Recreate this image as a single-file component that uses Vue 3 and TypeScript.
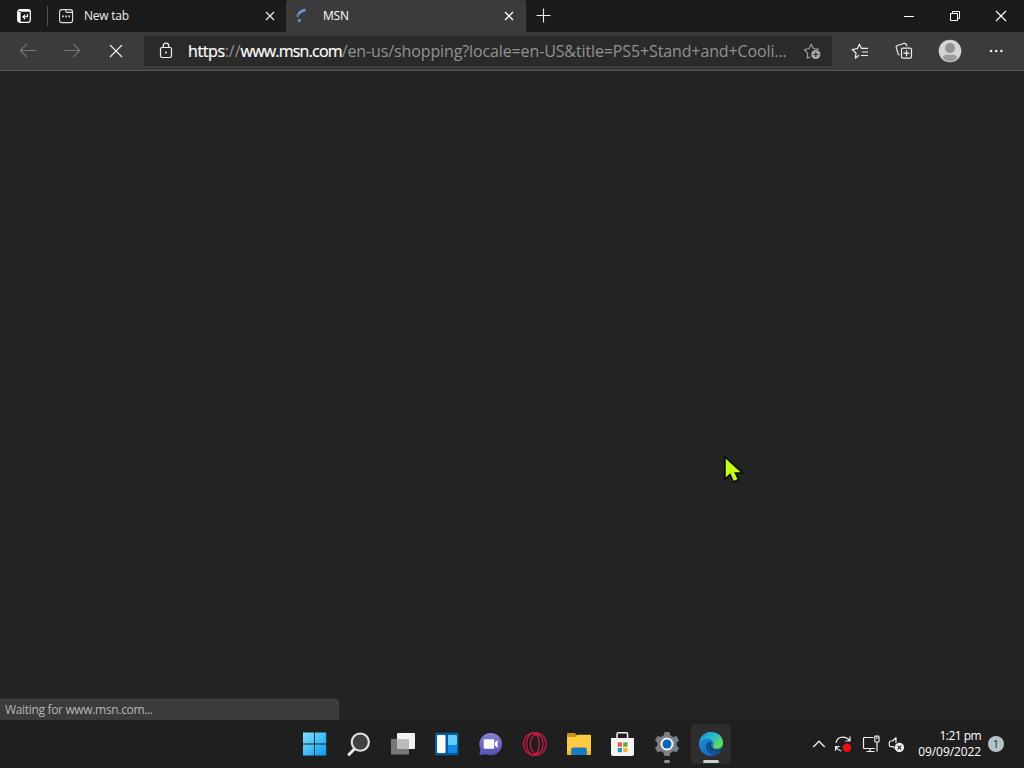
<script setup lang="ts">
const status = 'Waiting for www.msn.com...'
</script>

<template>
  <div class="screen">
    <header class="titlebar">
      <div class="tab-actions">
        <svg width="16" height="16" viewBox="0 0 16 16" fill="none">
          <rect x="1.7" y="1.7" width="12.6" height="12.6" rx="2.2" stroke="#fff" stroke-width="1.2" />
          <path d="M2 3.8H14V2.8L13 2H3L2 3Z M2 3H4.6V14H3L2 13Z" fill="#fff" />
          <path d="M11.4 6V8.8H7.2M9.2 6.6L7 8.8L9.2 11" stroke="#fff" stroke-width="1.1" />
        </svg>
      </div>
      <div class="tab idle">
        <svg width="16" height="16" viewBox="0 0 16 16" fill="none" stroke="#e2e2e2" stroke-width="1.1">
          <rect x="1.6" y="1.6" width="13" height="13" rx="2.4" />
          <path d="M7.8 1.6V3.3Q7.8 4.4 9 4.4H14.6" />
          <path d="M4.2 8.4H5.8M7.3 8.4H8.9M10.4 8.4H12" stroke-width="1.6" />
        </svg>
        <span class="tab-title first">New tab</span>
        <svg class="close" width="10" height="10" viewBox="0 0 10 10"><path d="M1 1L9 9M9 1L1 9" stroke="#eee" stroke-width="1.2" /></svg>
      </div>
      <div class="tab active">
        <svg width="16" height="16" viewBox="0 0 16 16" fill="none">
          <path d="M10.6 2Q5.7 2.5 3.4 6.4" stroke="#6a9bd0" stroke-width="2.7" />
          <path d="M2.9 5.8L2.8 9.2" stroke="#57799e" stroke-width="2.4" />
          <circle cx="4.3" cy="12.5" r="1.7" fill="#6492c2" />
        </svg>
        <span class="tab-title second">MSN</span>
        <svg class="close" width="10" height="10" viewBox="0 0 10 10"><path d="M1 1L9 9M9 1L1 9" stroke="#fff" stroke-width="1.3" /></svg>
      </div>
      <svg class="plus" width="16" height="16" viewBox="0 0 16 16"><path d="M.5 7.5H14.5M7.5 .5V14.5" stroke="#eee" stroke-width="1.1" /></svg>
      <div class="window-buttons">
        <span><svg width="12" height="12" viewBox="0 0 12 12"><path d="M1 6.5H11" stroke="#fff" /></svg></span>
        <span><svg width="12" height="12" viewBox="0 0 12 12" fill="none" stroke="#fff"><path d="M1.5 3.5H8.5V10.5H1.5Z" /><path d="M3.5 3.5V1.5H10.5V8.5H8.5" /></svg></span>
        <span><svg width="12" height="12" viewBox="0 0 12 12"><path d="M1 1L11 11M11 1L1 11" stroke="#fff" stroke-width="1.2" /></svg></span>
      </div>
    </header>

    <nav class="toolbar">
      <span class="nav"><svg width="18" height="16" viewBox="0 0 18 16" fill="none" stroke="#777" stroke-width="1.1"><path d="M17 7.5H1.5M8 .8L1.3 7.5L8 14.2" /></svg></span>
      <span class="nav"><svg width="18" height="16" viewBox="0 0 18 16" fill="none" stroke="#777" stroke-width="1.1"><path d="M1 7.5H16.5M10 .8L16.7 7.5L10 14.2" /></svg></span>
      <span class="nav"><svg width="16" height="16" viewBox="0 0 16 16"><path d="M2 2L14 14M14 2L2 14" stroke="#eee" stroke-width="1.1" /></svg></span>
      <div class="address">
        <svg class="lock" width="14" height="18" viewBox="0 0 14 18" fill="none" stroke="#eee" stroke-width="1.2">
          <rect x="1.5" y="5.5" width="11" height="10" rx="1.5" /><path d="M4.2 5.5V4Q4.2 1.2 7 1.2Q9.8 1.2 9.8 4V5.5" /><circle cx="7" cy="10.6" r="1" fill="#eee" stroke="none" />
        </svg>
        <div class="url"><span class="scheme">https</span><span class="slashes">://</span><span class="host">www.msn.com</span><span class="path">/en-us/shopping?locale=en-US&amp;title=PS5+Stand+and+Cooli...</span></div>
        <svg class="add-fav" width="18" height="18" viewBox="0 0 18 18" fill="none">
          <path d="M7.5 15L4.1 16.1L4.7 11.3L1.3 7.5L6.1 6.7L8.3 2.2L10.5 6.7L16 7.4" stroke="#999" stroke-width="1.2" stroke-linejoin="round" />
          <circle cx="12.8" cy="12.5" r="4.6" fill="#aaa" /><path d="M10.2 12.5H15.4M12.8 9.9V15.1" stroke="#303030" stroke-width="1.2" />
        </svg>
      </div>
      <span class="tool">
        <svg width="18" height="18" viewBox="0 0 18 18" fill="none" stroke="#eee" stroke-width="1.2" stroke-linejoin="round"><path d="M8 13.3L4.3 16.2L5 11L1.2 7.5L6.4 6.7L8.4 2.2L10.5 6.4H17M11.2 10H17M10 13.5H17" /></svg>
      </span>
      <span class="tool">
        <svg width="18" height="18" viewBox="0 0 18 18" fill="none" stroke="#eee" stroke-width="1.2" stroke-linejoin="round"><path d="M4.5 12.9L3.3 12.4L1.2 5.5Q.9 4 2.4 3.5L8.6 1.5Q10.5 1 11.2 2.5L12 4.2" /><rect x="6.5" y="6.2" width="10" height="10" rx="1.5" fill="#3b3b3b" /><path d="M11.5 8.2V14.2M8.5 11.2H14.5" /></svg>
      </span>
      <span class="tool profile">
        <svg width="24" height="24" viewBox="0 0 24 24"><circle cx="12" cy="12" r="11.3" fill="#d4d4d4" /><circle cx="12" cy="9" r="5" fill="#929292" /><path d="M4.7 18.5Q5.5 15.7 8.5 15.7H15.5Q18.5 15.7 19.3 18.5Q16.5 22.5 12 22.5Q7.5 22.5 4.7 18.5Z" fill="#9c9c9c" /></svg>
      </span>
      <span class="tool more"><svg width="16" height="4" viewBox="0 0 16 4" fill="#eee"><circle cx="3" cy="2" r="1.3" /><circle cx="8.2" cy="2" r="1.3" /><circle cx="13.4" cy="2" r="1.3" /></svg></span>
    </nav>

    <main class="page">
      <svg class="cursor" width="24" height="32" viewBox="0 0 24 32"><path d="M2 2V24L7 19.5L10.5 27L15.5 24.5L12.3 18H19.5Z" fill="#c5ff16" stroke="#080b03" stroke-width="1.5" /></svg>
      <div class="status"><span>{{ status }}</span></div>
    </main>

    <footer class="taskbar">
      <div class="apps">
        <span class="app">
          <svg width="24" height="24" viewBox="0 0 24 24"><defs><linearGradient id="win" x1="0" y1="0" x2="1" y2="1"><stop stop-color="#83e0fc" /><stop offset="1" stop-color="#079bf4" /></linearGradient></defs><path d="M0 .5H11.2V11.4H0ZM12 .5H23.2V11.4H12ZM0 12.4H11.2V23.5H0ZM12 12.4H23.2V23.5H12Z" fill="url(#win)" /></svg>
        </span>
        <span class="app"><svg width="24" height="24" viewBox="0 0 24 24" fill="#414141" stroke="#e6e6e6"><path d="M7.9 16.5L2.1 22.4" stroke-width="3" stroke-linecap="round" /><circle cx="13.3" cy="10.1" r="8.6" stroke-width="2.1" /></svg></span>
        <span class="app"><svg width="26" height="24" viewBox="0 0 26 24"><rect x="7" y="1" width="18" height="16" rx="1" fill="#f2f2f2" /><rect x="1" y="7" width="18" height="15.5" rx="1" fill="#777" /><path d="M7 7H19V17H7Z" fill="#bbb" /></svg></span>
        <span class="app"><svg width="24" height="24" viewBox="0 0 24 24"><rect x="0" y=".8" width="23.5" height="22.5" rx="1.5" fill="#075b9f" /><rect x="2" y="3" width="8.5" height="18" rx="1" fill="#f6fbff" /><rect x="13" y="3" width="9" height="10" rx=".7" fill="#66cef6" /><path d="M13 13H22V20Q22 21 21 21H14Q13 21 13 20Z" fill="#118ae8" /></svg></span>
        <span class="app">
          <svg width="24" height="24" viewBox="0 0 24 24"><defs><linearGradient id="chat" x1="0" y1="0" x2="0" y2="1"><stop stop-color="#8781d0" /><stop offset="1" stop-color="#5550b5" /></linearGradient></defs><path d="M11.7.9A11.2 11.2 0 1 1 7 22.2L.3 23.2L1.5 17.1A11.2 11.2 0 0 1 11.7.9Z" fill="url(#chat)" /><rect x="4.7" y="7.2" width="10.5" height="9.5" rx="1" fill="#fff" /><path d="M15.9 10.5L18.6 8V16L15.9 13.5Z" fill="#fff" /></svg>
        </span>
        <span class="app"><svg width="26" height="26" viewBox="0 0 26 26" fill="none" stroke="#d81b46" stroke-width="1.15"><circle cx="12.9" cy="13" r="11.4" /><circle cx="12.9" cy="13" r="10.4" stroke="#76142b" stroke-width=".7" /><ellipse cx="11" cy="13" rx="6.3" ry="11" /><ellipse cx="14.7" cy="13" rx="6.3" ry="9.9" /></svg></span>
        <span class="app"><svg width="26" height="24" viewBox="0 0 26 24"><path d="M1 2Q1 1 2 1H8.8L11 3.2L8.8 5.5H1Z" fill="#c99318" /><path d="M1 5H9L11.2 2.8H24Q25 2.8 25 3.8V22Q25 23 24 23H2Q1 23 1 22Z" fill="#fecb42" /><path d="M1 19H25V22Q25 23 24 23H2Q1 23 1 22Z" fill="#eeb52d" /><path d="M5.2 23V17.5Q5.2 15.5 7.2 15.5H18.8Q20.8 15.5 20.8 17.5V23Z" fill="#167bc1" /></svg></span>
        <span class="app"><svg width="26" height="26" viewBox="0 0 26 26"><path d="M7 8V3Q7 1.8 8.3 1.8H16.3Q17.6 1.8 17.6 3V8" fill="none" stroke="#f4f4f4" stroke-width="1.5" /><path d="M1 7H24V23Q24 25 22 25H3Q1 25 1 23Z" fill="#f5f5f5" /><path d="M7.7 11.4H12V15.7H7.7Z" fill="#e45a36" /><path d="M13.2 11.4H17.5V15.7H13.2Z" fill="#5ba63d" /><path d="M7.7 16.9H12V21.2H7.7Z" fill="#1899ce" /><path d="M13.2 16.9H17.5V21.2H13.2Z" fill="#f3ba23" /></svg></span>
        <span class="app running"><svg width="26" height="26" viewBox="0 0 26 26"><path d="M10.5 1H15.5L16.3 4.3L19.4 6L22.6 5L25 9.4L22.6 11.7V14.6L25 17L22.5 21.2L19.3 20.3L16.3 22L15.5 25H10.5L9.7 22L6.7 20.3L3.5 21.2L1 17L3.4 14.6V11.7L1 9.4L3.5 5L6.7 6L9.7 4.3Z" fill="#7b8084" /><circle cx="13" cy="13" r="6.5" fill="#eef3f8" /><circle cx="13" cy="13" r="4.5" fill="#0b64b2" /></svg></span>
        <span class="app running current">
          <svg width="26" height="26" viewBox="0 0 26 26"><defs><linearGradient id="edgeTop" x1="0" y1="0" x2="1" y2=".7"><stop stop-color="#198bd5" /><stop offset=".5" stop-color="#25bacb" /><stop offset="1" stop-color="#70dd4b" /></linearGradient><linearGradient id="edgeBase" x1="0" y1="0" x2=".7" y2="1"><stop stop-color="#2193de" /><stop offset="1" stop-color="#1266b5" /></linearGradient></defs><circle cx="13" cy="13" r="12" fill="url(#edgeBase)" /><path d="M1.2 12.5C2 5.5 7 1 13 1C20.5 1 25 6.4 25 11.5C25 16 21.4 17.8 18.2 17.5C15.5 17.2 14.6 16.2 15.2 14.7C16.2 11.8 14.7 8.2 9.5 7.8C5.5 7.5 2.2 9.6 1.2 12.5Z" fill="url(#edgeTop)" /><path d="M9.5 11.5C5.6 15.5 9.2 24.5 17 24.2Q20.5 22.8 23 19.3C18 21.4 12.1 19.5 12.2 14.8Q12.3 12.2 14 10.9Q11.5 9.8 9.5 11.5Z" fill="#115197" /><path d="M14 11Q12.4 13 13 15.3Q14.4 19.7 20.3 18.9L23.8 17.8L25.5 19L22.5 20Q12.4 20.7 12 15.8Q11.8 12.7 14 11Z" fill="#2b2d2e" /></svg>
        </span>
      </div>
      <div class="tray">
        <svg class="chevron" width="14" height="10" viewBox="0 0 14 10"><path d="M1.3 8L7 2.2L12.7 8" fill="none" stroke="#eee" stroke-width="1.3" /></svg>
        <svg class="sync" width="18" height="18" viewBox="0 0 18 18" fill="none" stroke="#eee" stroke-width="1.2"><path d="M2 8Q3 2.2 9 2.2Q13 2.2 15.6 5.5M16 1.5V6H11.5M1.5 15.7V11.7H5.6M2 12.3Q4 15.5 7.3 16" /><circle cx="13" cy="12.8" r="4.2" fill="#f50b14" stroke="none" /></svg>
        <svg class="network" width="18" height="18" viewBox="0 0 18 18" fill="none" stroke="#eee" stroke-width="1.2"><path d="M11.5 2.5H2.5Q1.5 2.5 1.5 3.5V12.5Q1.5 13.5 2.5 13.5H13M8 13.5V16.4M4.5 16.5H12.5M15 7V16.5" /><rect x="12.8" y="1.2" width="4.2" height="5.8" rx=".7" /><path d="M14.9 2V4" /></svg>
        <svg class="volume" width="17" height="18" viewBox="0 0 17 18" fill="none"><path d="M7.5 13.2L5 11.7H2.8Q1.3 11.7 1.3 10.2V7.4Q1.3 6 2.8 6H4.5L8 2.7V8" stroke="#eee" stroke-width="1.2" stroke-linejoin="round" /><circle cx="11.4" cy="12.5" r="4.7" fill="#f2f2f2" /><path d="M9.6 10.7L13.2 14.3M13.2 10.7L9.6 14.3" stroke="#202020" stroke-width="1.1" /></svg>
        <div class="clock"><span class="time">1:21 pm</span><span class="date">09/09/2022</span></div>
        <span class="badge">1</span>
      </div>
    </footer>
  </div>
</template>

<style>
body { margin: 0; overflow: hidden; background: #232323; }
</style>

<style scoped>
* { box-sizing: border-box; }
svg { display: block; flex: none; }
.screen { width: 1024px; height: 768px; display: flex; flex-direction: column; background: #232323; color: #eee; font: 12px/16px "Open Sans", "Noto Sans", sans-serif; overflow: hidden; }
.titlebar { height: 32px; flex: none; display: flex; align-items: center; background: #1b1b1b; }
.tab-actions { width: 48px; height: 20px; padding: 2px 0 0 16px; border-right: 1px solid #555; }
.tab { height: 32px; display: flex; align-items: center; }
.tab.idle { width: 238px; padding: 0 11px 0 10px; }
.tab.active { width: 240px; padding: 0 12px 0 9px; background: #3b3b3b; border-radius: 3px 3px 0 0; }
.tab-title { white-space: nowrap; }
.first { margin-left: 10px; letter-spacing: -.25px; }
.second { margin-left: 12px; letter-spacing: -.2px; color: #fff; }
.close { margin-left: auto; }
.plus { margin-left: 10px; }
.window-buttons { margin-left: auto; display: flex; height: 28px; }
.window-buttons span { width: 46px; display: grid; place-items: center; }
.toolbar { height: 39px; flex: none; display: flex; background: #3b3b3b; border-bottom: 1px solid #565656; padding-left: 6px; }
.nav { width: 44px; height: 38px; display: grid; place-items: center; }
.address { width: 688px; height: 30px; margin: 4px 0 0 6px; padding: 0 11px 0 15px; display: flex; align-items: center; background: #2a2a2a; }
.url { width: 612px; margin-left: 15px; display: flex; white-space: nowrap; font-size: 16px; line-height: 24px; color: #929292; }
.scheme, .host { color: #fff; -webkit-text-stroke: .2px #fff; }
.url .scheme { letter-spacing: -.4px; }
.url .slashes { letter-spacing: 0; }
.url .host { letter-spacing: -.8px; }
.url .path { letter-spacing: -.12px; }
.add-fav { margin-left: auto; }
.tool { width: 44px; height: 38px; display: grid; place-items: center; }
.tool:nth-of-type(4) { margin-left: 6px; }
.profile { width: 48px; }
.more { width: 44px; }
.page { flex: 1; min-height: 0; position: relative; display: flex; align-items: flex-end; background: #232323; }
.cursor { position: absolute; left: 723px; top: 384px; }
.status { width: 339px; height: 21px; padding: 2px 5px; background: #3b3b3b; border: 1px solid #424242; border-width: 1px 1px 0 0; border-top-right-radius: 4px; color: #b6b6b6; white-space: nowrap; letter-spacing: -.33px; }
.taskbar { height: 48px; flex: none; padding-left: 292px; display: flex; background: #1f1f1f; }
.apps { display: flex; align-items: center; gap: 4px; padding-left: 3px; }
.app { position: relative; width: 40px; height: 40px; display: grid; place-items: center; border-radius: 4px; }
.current { background: #2d2d2d; }
.running::after { content: ""; position: absolute; bottom: 1px; left: 17px; width: 6px; height: 3px; border-radius: 2px; background: #929292; }
.current::after { left: 12px; width: 16px; background: #c7cfd3; }
.tray { margin-left: auto; padding-right: 20px; display: flex; align-items: center; }
.sync { margin-left: 8px; }
.network { margin-left: 10px; }
.volume { margin-left: 8px; }
.clock { width: 65px; margin-left: 11px; display: flex; flex-direction: column; align-items: flex-end; white-space: nowrap; color: #fff; }
.time { letter-spacing: -.55px; }
.date { letter-spacing: -.1px; }
.badge { width: 16px; height: 16px; margin-left: 7px; border-radius: 50%; background: #b3c3ca; color: #252a2c; font-size: 11px; line-height: 16px; text-align: center; }
</style>
